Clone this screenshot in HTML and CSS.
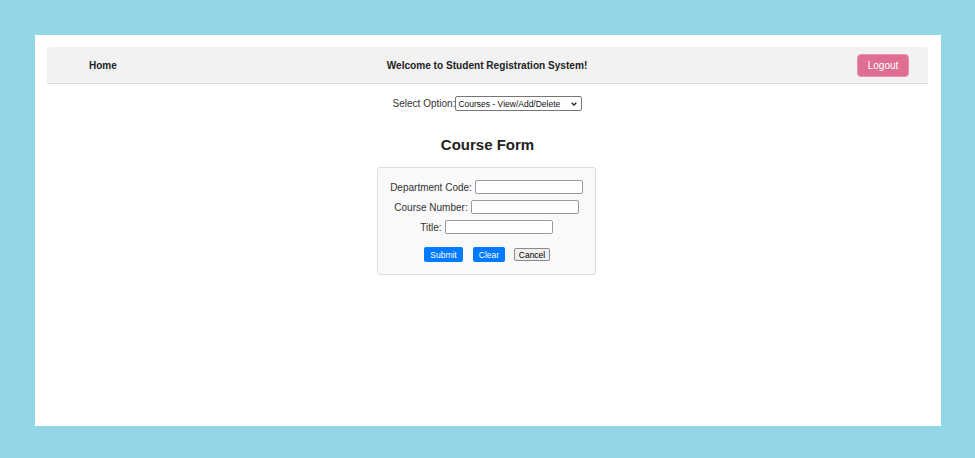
FILE: index.html
```html
<!DOCTYPE html>
<html>
<head>
<meta charset="utf-8">
<link rel="stylesheet" href="styles.css">
</head>
<body>
<div class="panel">
  <nav class="nav">
    <a class="home">Home</a>
    <div class="welcome">Welcome to Student Registration System!</div>
    <button class="logout">Logout</button>
  </nav>
  <div class="select-row">
    <label>Select Option:</label>
    <span class="select-wrap">
      <select class="opt"><option>Courses - View/Add/Delete</option></select>
      <svg class="chev" width="6" height="4" viewBox="0 0 6 4"><path d="M0.7 0.7 L3 3 L5.3 0.7" fill="none" stroke="#222" stroke-width="1.3"/></svg>
    </span>
  </div>
  <h2 class="title">Course Form</h2>
  <div class="form">
    <div class="row"><label>Department Code:</label><input class="field" type="text"></div>
    <div class="row"><label>Course Number:</label><input class="field" type="text"></div>
    <div class="row"><label>Title:</label><input class="field" type="text"></div>
    <div class="buttons">
      <button class="btn blue submit">Submit</button>
      <button class="btn blue clear">Clear</button>
      <button class="btn cancel">Cancel</button>
    </div>
  </div>
</div>
</body>
</html>
```
FILE: styles.css
```css
html, body { margin: 0; padding: 0; }
body {
  background: #93d7e6;
  padding: 35px 34px 32px 35px;
  font-family: "Liberation Sans", Arial, sans-serif;
  color: #333;
}
.panel {
  background: #fff;
  height: 391px;
  padding: 12px 13px 0 12px;
  box-sizing: border-box;
}
.nav {
  display: flex;
  align-items: center;
  height: 36px;
  background: #f2f2f2;
  border-bottom: 1px solid #dcdcdc;
  border-radius: 3px 3px 0 0;
  padding: 0 19px 0 42px;
}
.home {
  font-size: 10px;
  font-weight: bold;
  color: #222;
  width: 100px;
}
.welcome {
  flex: 1;
  text-align: center;
  font-size: 10.1px;
  font-weight: bold;
  color: #222;
  padding-right: 72px;
}
.logout {
  width: 52px;
  height: 23px;
  background: #de6f93;
  color: #fff;
  border: 1px solid #e892ae;
  border-radius: 4px;
  font-family: "Liberation Sans", Arial, sans-serif;
  font-size: 10px;
  padding: 0;
}
.select-row {
  display: flex;
  justify-content: center;
  align-items: center;
  margin-top: 12px;
  font-size: 10px;
  color: #333;
}
.select-wrap {
  position: relative;
  display: inline-block;
  height: 15px;
}
.opt {
  -webkit-appearance: none;
  appearance: none;
  width: 127px;
  height: 15px;
  box-sizing: border-box;
  font-family: "Liberation Sans", Arial, sans-serif;
  font-size: 8.5px;
  padding: 0 0 0 2px;
  border: 1px solid #767676;
  border-radius: 2px;
  background: #fff;
  color: #111;
  display: block;
}
.chev {
  position: absolute;
  right: 5px;
  top: 6px;
  pointer-events: none;
}
.title {
  text-align: center;
  font-size: 15px;
  font-weight: bold;
  color: #222;
  margin: 25px 0 0 0;
  line-height: 17px;
}
.form {
  width: 219px;
  box-sizing: border-box;
  margin: 14px auto 0;
  background: #f9f9f9;
  border: 1px solid #dedede;
  border-radius: 3px;
  padding: 9px 0 12px;
  position: relative;
  left: -1px;
}
.row {
  display: flex;
  justify-content: center;
  align-items: center;
  height: 20px;
  font-size: 10px;
  color: #333;
}
.row label { margin-right: 3px; }
.field {
  width: 108px;
  height: 14px;
  box-sizing: border-box;
  border: 1px solid #9a9a9a;
  border-radius: 2px;
  background: #fff;
  padding: 0;
}
.buttons {
  display: flex;
  justify-content: center;
  align-items: center;
  margin-top: 10px;
  padding-left: 1px;
}
.btn {
  font-family: "Liberation Sans", Arial, sans-serif;
  font-size: 8.5px;
  padding: 0;
  cursor: pointer;
}
.blue {
  height: 15px;
  background: #007bff;
  color: #fff;
  border: none;
  border-radius: 2px;
}
.submit { width: 39px; margin-right: 10px; }
.clear { width: 32px; margin-right: 9px; }
.cancel {
  width: 36px;
  height: 13px;
  background: #efefef;
  color: #000;
  border: 1px solid #8a8a8a;
  border-radius: 2px;
}
```
